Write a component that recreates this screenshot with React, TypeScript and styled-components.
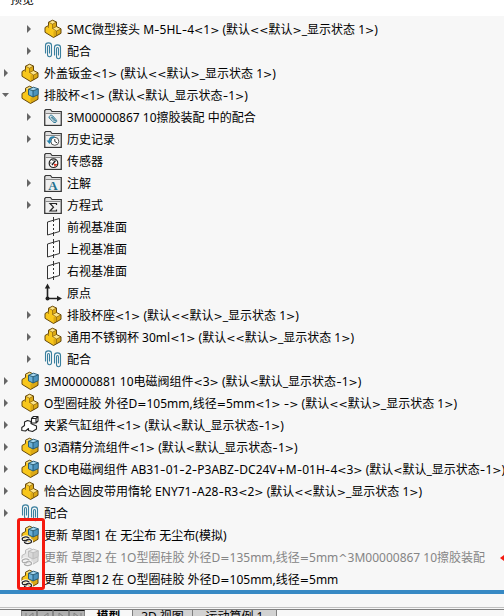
import React from "react";
import styled, { createGlobalStyle, css } from "styled-components";

const GlobalStyle = createGlobalStyle`
  * { box-sizing: border-box; }
  html, body { margin: 0; background: #f7f7f7; }
  body { overflow: hidden; }
  body, button {
    font-family: "Noto Sans", "Noto Sans CJK SC", sans-serif;
    font-size: 12px;
    color: #000;
  }
`;

const Window = styled.main`
  display: flex;
  flex-direction: column;
  height: 100vh;
  overflow: hidden;
`;

const Header = styled.header`
  flex: none;
  display: flex;
  align-items: flex-end;
  height: 16px;
  padding: 0 0 7px 10px;
  overflow: hidden;
  line-height: 18px;
  background: #fff;
`;

const Tree = styled.ul`
  flex: none;
  margin: 0;
  padding: 0;
  list-style: none;

  ${Header} + & { padding-top: 2px; }
`;

const Row = styled.li<{ $level: number; $muted?: boolean }>`
  display: flex;
  align-items: center;
  height: 22px;
  padding-left: ${(p) => (p.$level === 2 ? 23 : 0)}px;
  white-space: nowrap;
  color: ${(p) => (p.$muted ? "#858585" : "#000")};
`;

const Toggle = styled.button`
  flex: none;
  display: flex;
  align-items: center;
  justify-content: center;
  width: 12px;
  height: 16px;
  margin-right: 9px;
  padding: 0;
  border: 0;
  background: none;
`;

const ToggleSpace = styled.span`
  flex: none;
  width: 21px;
`;

const IconSlot = styled.span<{ $muted?: boolean }>`
  flex: none;
  display: flex;
  width: 23px;
  height: 20px;
  ${(p) => p.$muted && css`filter: grayscale(1); opacity: 0.35;`}
`;

const Label = styled.span`
  padding-top: 2px;
  line-height: 20px;
`;

const Operator = styled.span`
  font-family: "DejaVu Sans", sans-serif;
  font-size: 11px;
  line-height: 1;
`;

const Dash = styled.span`
  font-family: Inter, sans-serif;
  line-height: 1;
`;

const Marked = styled.div`
  flex: none;
  position: relative;
`;

const MarkFrame = styled.span`
  position: absolute;
  top: -6px;
  left: 17px;
  width: 28px;
  bottom: 0;
  border: 3px solid #f5190f;
  border-radius: 3px;
`;

const MarkArrow = styled.svg`
  position: absolute;
  right: 0;
  top: 31px;
`;

const RollbackBar = styled.div`
  flex: none;
  height: 4px;
  background: #3789c4;
`;

const Footer = styled.footer`
  flex: none;
  margin-top: 13px;
  border-top: 1px solid #c0c0c0;
  background: #f7f7f7;
`;

const TabBar = styled.nav`
  display: flex;
  height: 24px;
  margin-top: 1px;
  padding-left: 21px;
  border-top: 1px solid #808080;
`;

const StepButton = styled.button`
  display: flex;
  justify-content: center;
  width: 16px;
  padding: 1px 0 0;
  border: 1px solid #858585;
  border-top-color: #111;
  background: #b0b0b0;
`;

const Tab = styled.button<{ $active?: boolean; $wide?: boolean }>`
  width: ${(p) => (p.$active ? 48 : p.$wide ? 84 : 60)}px;
  height: 24px;
  padding: 0;
  border: 0;
  border-right: 1px solid #808080;
  line-height: 14px;
  display: flex;
  justify-content: center;
  white-space: nowrap;
  font-weight: ${(p) => (p.$active ? 700 : 400)};
  background: ${(p) => (p.$active ? "#f7f7f7" : "#d2d2d2")};
`;

const svgProps = { width: 18, height: 20, viewBox: "0 0 18 20", fill: "none" };

function PartShape() {
  return (
    <g strokeLinejoin="round">
      <path d="M1 8.5 4.5 6.5V3.2L8.5 1.2 12.5 3V7.5L17 9.8V14.3L9.5 18.5 1 13.3Z" fill="#f8c71c" />
      <path d="M4.5 3.2 8.5 1.2 12.5 3 8.5 5.2Z" fill="#fde58a" />
      <path d="M9.5 12.5 17 9.8V14.3L9.5 18.5Z" fill="#dca914" />
      <path d="M8.5 9.5 12.5 7.5 17 9.8 12.5 12Z" fill="#fde58a" />
      <path d="M8.5 5.2 12.5 3V7.5L8.5 9.5Z" fill="#dca914" />
      <path d="M4.5 3.2 8.5 5.2V9.5L12.5 12 17 9.8M8.5 5.2 12.5 3M8.5 9.5 12.5 7.5M4.5 6.5V9M12.5 12V16.8" stroke="#8a6410" strokeWidth=".7" />
      <path d="M1 8.5 4.5 6.5V3.2L8.5 1.2 12.5 3V7.5L17 9.8V14.3L9.5 18.5 1 13.3Z" stroke="#66480c" />
    </g>
  );
}

function AssemblyShape() {
  return (
    <g strokeLinejoin="round">
      <path d="M1 8.5 4.5 6.5V3.2L8.5 1.2 12.5 3 17 9.8V14.3L9.5 18.5 1 13.3Z" fill="#f8c71c" />
      <path d="M4.5 3.2 8.5 1.2 12.5 3 8.5 5.2Z" fill="#fde58a" />
      <path d="M9.5 13 17 9.8V14.3L9.5 18.5Z" fill="#dca914" />
      <path d="M1 8.5 4.5 6.5V3.2L8.5 1.2 12.5 3M17 9.8V14.3L9.5 18.5 1 13.3V8.5" stroke="#66480c" />
      <path d="M7.5 4.2 12 5.8V12L7.5 9.8Z" fill="#6db0d6" />
      <path d="M12 5.8 17.3 3.8V9.6L12 12Z" fill="#4c93bd" />
      <path d="M7.5 4.2 12.5 2.2 17.3 3.8 12 5.8Z" fill="#a8d8f0" />
      <path d="M7.5 4.2 12.5 2.2 17.3 3.8V9.6L12 12 7.5 9.8ZM7.5 4.2 12 5.8 17.3 3.8M12 5.8V12" stroke="#1c5473" strokeWidth=".9" />
    </g>
  );
}

function FolderShape() {
  return (
    <>
      <path d="M.7 17.3V2.5L1.7 1.5H6.5L8 3.5H17.3V17.3Z" fill="#dedede" stroke="#383838" strokeWidth="1.2" />
      <path d="M1.5 5.5H16.5" stroke="#8a8a8a" />
      <path d="M2 6H16V16.5H2Z" fill="#f0f0f0" />
    </>
  );
}

type Kind =
  | "part" | "assembly" | "outline" | "linked" | "mates" | "mateFolder"
  | "history" | "sensor" | "note" | "equation" | "plane" | "origin";

const folderProps = { ...svgProps, viewBox: "0 -1 18 20" };

function Icon({ kind }: { kind: Kind }) {
  switch (kind) {
    case "part":
      return <svg {...svgProps}><PartShape /></svg>;
    case "assembly":
      return <svg {...svgProps}><AssemblyShape /></svg>;
    case "outline":
      return (
        <svg {...svgProps} stroke="#222" strokeWidth="1.1" strokeLinejoin="round">
          <path d="M.8 12.5 3.5 10.5V7L6.5 5.5 10 6.5V8.5L12 9.5 15.5 11V14L11.5 16.5 7.5 15.5V13.5L4.5 16 .8 15.5Z" fill="#fff" />
          <path d="M10.5 3.5 12.5 1.5H17V6L15 8H10.5ZM10.5 3.5H15V8M15 3.5 17 1.5" fill="#fff" />
        </svg>
      );
    case "linked":
      return (
        <svg {...svgProps}>
          <AssemblyShape />
          <g strokeLinecap="round">
            <path d="M8 13C5.5 11 1 12 1.2 14.2S5 16 6.5 14.5M3.5 17.5C6 19.5 10.8 18.5 10.5 16.2S6.5 14.5 5 16" stroke="#fff" strokeWidth="3" />
            <path d="M8 13C5.5 11 1 12 1.2 14.2S5 16 6.5 14.5M3.5 17.5C6 19.5 10.8 18.5 10.5 16.2S6.5 14.5 5 16" stroke="#222" strokeWidth="1.3" />
          </g>
        </svg>
      );
    case "mates":
      return (
        <svg {...svgProps} stroke="#397f9e" strokeWidth="1.1" strokeLinecap="round">
          <path d="M1.5 12V4.5C1.5 1 7.5 1 7.5 4.5V13.5C7.5 16.5 3.5 16.5 3.5 13.5V6C3.5 4 5.5 4 5.5 6V12" />
          <path d="M10.5 14V6.5C10.5 3 16.5 3 16.5 6.5V15.5C16.5 18.5 12.5 18.5 12.5 15.5V8C12.5 6 14.5 6 14.5 8V14" />
        </svg>
      );
    case "mateFolder":
      return (
        <svg {...folderProps}>
          <FolderShape />
          <path d="M5.2 9.8 9 13.8C11 15.8 14 13.8 12 11.6L8.8 8C7 6 4 8 5.6 10.2M7 9.2 10.5 13C11.5 13.8 12 12.8 11.3 12L8 8.8" stroke="#2c7895" strokeLinecap="round" />
        </svg>
      );
    case "history":
      return (
        <svg {...folderProps}>
          <FolderShape />
          <circle cx="10.8" cy="11.3" r="4" fill="#fff" stroke="#555" />
          <path d="M10.8 9V11.5L13 12.8" stroke="#333" />
          <path d="M10.5 7.2C7 6.8 5.6 8.5 5.4 11" stroke="#2681ab" strokeWidth="1.8" />
          <path d="M2.5 10.5H8L5.5 14Z" fill="#2681ab" />
        </svg>
      );
    case "sensor":
      return (
        <svg {...folderProps}>
          <FolderShape />
          <circle cx="9.5" cy="11.2" r="4.3" fill="#fff" stroke="#222" strokeWidth="1.2" />
          <path d="M9.8 11.8 10.5 15 13.5 12Z" fill="#e23520" />
          <path d="M8 13 11.5 8.5" stroke="#222" strokeWidth="1.4" />
          <path d="M6.2 11H7.4M9 8V9" stroke="#222" />
        </svg>
      );
    case "note":
      return (
        <svg {...folderProps}>
          <FolderShape />
          <text x="9" y="16" textAnchor="middle" fontFamily="Liberation Serif, serif" fontSize="13" fontWeight="700" fill="#23708f">A</text>
        </svg>
      );
    case "equation":
      return (
        <svg {...folderProps}>
          <FolderShape />
          <path d="M12.5 9V7.5H6L9.5 11.2 6 15H12.5V13.5" stroke="#222" strokeWidth="1.2" />
        </svg>
      );
    case "plane":
      return (
        <svg {...svgProps} stroke="#333">
          <path d="M3.5 5 15.5 1.5V14.5L3.5 18Z" fill="#fbfbfb" />
          <path d="M9.5 0V5M9.5 7V9M9.5 11V13M9.5 15V19" />
        </svg>
      );
    case "origin":
      return (
        <svg {...svgProps}>
          <path d="M3.5 4V15.5H14" stroke="#222" strokeWidth="1.6" />
          <path d="M.8 5.5 3.5.5 6.2 5.5ZM13 12.8 18 15.5 13 18.2Z" fill="#222" />
          <circle cx="3.5" cy="15.5" r="2" fill="#222" />
        </svg>
      );
  }
}

type Item = { level: 1 | 2; kind: Kind; text: string; toggle?: "open" | "closed"; muted?: boolean };

const items: Item[] = [
  { level: 2, kind: "part", toggle: "closed", text: "SMC微型接头 M-5HL-4<1> (默认<<默认>_显示状态 1>)" },
  { level: 2, kind: "mates", toggle: "closed", text: "配合" },
  { level: 1, kind: "part", toggle: "closed", text: "外盖钣金<1> (默认<<默认>_显示状态 1>)" },
  { level: 1, kind: "assembly", toggle: "open", text: "排胶杯<1> (默认<默认_显示状态-1>)" },
  { level: 2, kind: "mateFolder", toggle: "closed", text: "3M00000867 10擦胶装配 中的配合" },
  { level: 2, kind: "history", toggle: "closed", text: "历史记录" },
  { level: 2, kind: "sensor", text: "传感器" },
  { level: 2, kind: "note", toggle: "closed", text: "注解" },
  { level: 2, kind: "equation", toggle: "closed", text: "方程式" },
  { level: 2, kind: "plane", text: "前视基准面" },
  { level: 2, kind: "plane", text: "上视基准面" },
  { level: 2, kind: "plane", text: "右视基准面" },
  { level: 2, kind: "origin", text: "原点" },
  { level: 2, kind: "part", toggle: "closed", text: "排胶杯座<1> (默认<<默认>_显示状态 1>)" },
  { level: 2, kind: "part", toggle: "closed", text: "通用不锈钢杯 30ml<1> (默认<<默认>_显示状态 1>)" },
  { level: 2, kind: "mates", toggle: "closed", text: "配合" },
  { level: 1, kind: "assembly", toggle: "closed", text: "3M00000881 10电磁阀组件<3> (默认<默认_显示状态-1>)" },
  { level: 1, kind: "part", toggle: "closed", text: "O型圈硅胶 外径D=105mm,线径=5mm<1> -> (默认<<默认>_显示状态 1>)" },
  { level: 1, kind: "outline", toggle: "closed", text: "夹紧气缸组件<1> (默认<默认_显示状态-1>)" },
  { level: 1, kind: "assembly", toggle: "closed", text: "03酒精分流组件<1> (默认<默认_显示状态-1>)" },
  { level: 1, kind: "assembly", toggle: "closed", text: "CKD电磁阀组件 AB31-01-2-P3ABZ-DC24V+M-01H-4<3> (默认<默认_显示状态-1>)" },
  { level: 1, kind: "part", toggle: "closed", text: "怡合达圆皮带用惰轮 ENY71-A28-R3<2> (默认<<默认>_显示状态 1>)" },
  { level: 1, kind: "mates", toggle: "closed", text: "配合" },
];

const updates: Item[] = [
  { level: 1, kind: "linked", text: "更新 草图1 在 无尘布 无尘布(模拟)" },
  { level: 1, kind: "linked", muted: true, text: "更新 草图2 在 1O型圈硅胶 外径D=135mm,线径=5mm^3M00000867 10擦胶装配" },
  { level: 1, kind: "linked", text: "更新 草图12 在 O型圈硅胶 外径D=105mm,线径=5mm" },
];

function renderPiece(piece: string, index: number) {
  if (index % 2 === 0) return piece;
  return piece === "-" ? <Dash key={index}>-</Dash> : <Operator key={index}>{piece}</Operator>;
}

function TreeRow({ item }: { item: Item }) {
  return (
    <Row $level={item.level} $muted={item.muted}>
      {item.toggle ? (
        <Toggle aria-label={item.text} aria-expanded={item.toggle === "open"}>
          <svg width="8" height="8" viewBox="0 0 8 8" fill="#666">
            {item.toggle === "open" ? <path d="M0 2H7L3.5 6Z" /> : <path d="M2 0 6 4 2 8Z" />}
          </svg>
        </Toggle>
      ) : (
        <ToggleSpace />
      )}
      <IconSlot $muted={item.muted}><Icon kind={item.kind} /></IconSlot>
      <Label>{item.text.split(/([<>=+^]+|-)/).map(renderPiece)}</Label>
    </Row>
  );
}

const steps = [
  { label: "首页", path: "M3 1V9M10 1 5 5 10 9Z" },
  { label: "上一页", path: "M9 1 4 5 9 9Z" },
  { label: "下一页", path: "M4 1 9 5 4 9Z" },
  { label: "末页", path: "M3 1 8 5 3 9ZM10 1V9" },
];

export default function App() {
  return (
    <Window>
      <GlobalStyle />
      <Header>预览</Header>
      <Tree>
        {items.map((item, i) => <TreeRow key={i} item={item} />)}
      </Tree>
      <Marked>
        <Tree>
          {updates.map((item, i) => <TreeRow key={i} item={item} />)}
        </Tree>
        <MarkFrame />
        <MarkArrow width="4" height="6" viewBox="0 0 4 6"><path d="M0 3 4 0V6Z" fill="#f5190f" /></MarkArrow>
      </Marked>
      <RollbackBar />
      <Footer>
        <TabBar>
          {steps.map((s) => (
            <StepButton key={s.label} aria-label={s.label}>
              <svg width="12" height="10" viewBox="0 0 12 10" fill="none" stroke="#808080"><path d={s.path} /></svg>
            </StepButton>
          ))}
          <Tab $active>模型</Tab>
          <Tab>3D 视图</Tab>
          <Tab $wide>运动算例 1</Tab>
        </TabBar>
      </Footer>
    </Window>
  );
}
